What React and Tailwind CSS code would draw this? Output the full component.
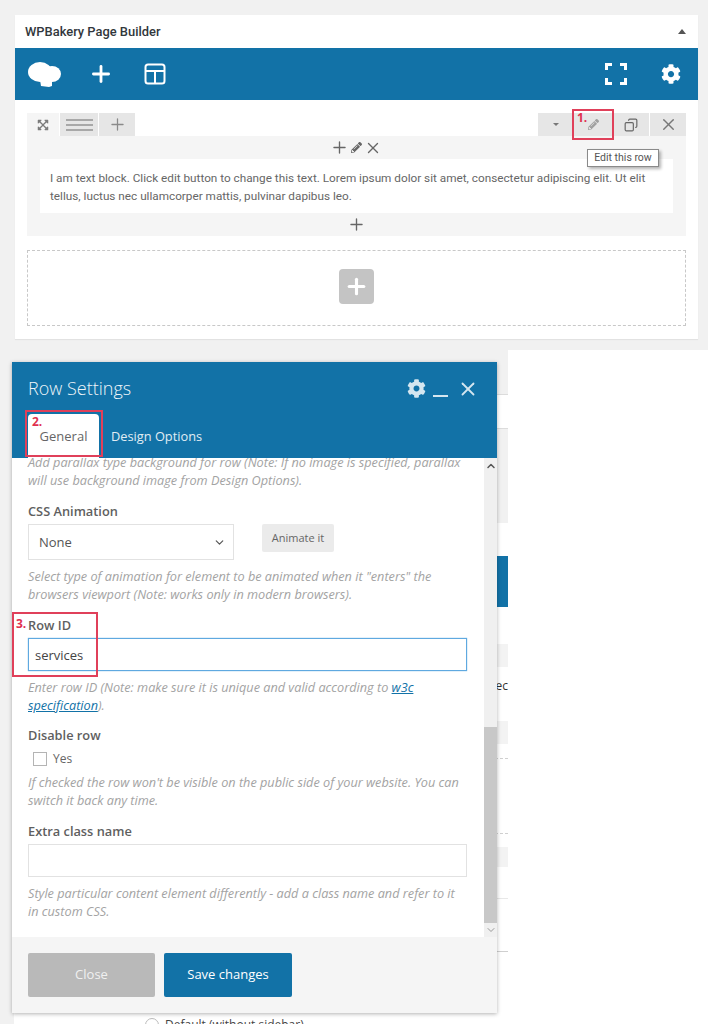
import { Plus, X, Copy, ChevronDown, ChevronUp } from 'lucide-react';
import { FaPencilAlt, FaExpandArrowsAlt, FaCog } from 'react-icons/fa';

const Note = ({ children, className = '' }) => (
  <p className={`text-[12.7px] leading-[18px] italic text-[#a3a3a3] ${className}`}>{children}</p>
);

const Label = ({ children, className = '' }) => (
  <div className={`text-[12.8px] leading-[18px] font-semibold text-[#5f5f5f] ${className}`}>{children}</div>
);

const Mark = ({ children, className = '' }) => (
  <span className={`absolute text-[12px] leading-[14px] font-bold text-[#e0304f] ${className}`}>{children}</span>
);

const CloudLogo = () => (
  <svg width="33" height="25" viewBox="0 0 33 25" fill="white">
    <ellipse cx="12" cy="10" rx="12" ry="10" />
    <ellipse cx="24" cy="12" rx="9" ry="8" />
    <path d="M12 18 L24 17 L24 24 L21 25 L13 24 Z" />
  </svg>
);

const LayoutIcon = () => (
  <svg width="22" height="22" viewBox="0 0 22 22" fill="none" stroke="white" strokeWidth="2">
    <rect x="1.5" y="1.5" width="19" height="19" rx="2.5" />
    <path d="M1.5 8h19M11 8v12.5" />
  </svg>
);

const FullscreenIcon = () => (
  <svg width="22" height="22" viewBox="0 0 22 22" fill="none" stroke="white" strokeWidth="3">
    <path d="M1.5 7V1.5H7M15 1.5h5.5V7M20.5 15v5.500H15M7 20.500H1.500V15" />
  </svg>
);

const HamburgerLines = () => (
  <div className="flex flex-col gap-[3px] w-[27px]">
    <div className="h-[2px] bg-[#a8a8a8]" />
    <div className="h-[2px] bg-[#a8a8a8]" />
    <div className="h-[2px] bg-[#a8a8a8]" />
  </div>
);

const BuilderPanel = () => (
  <div className="mx-[15px] w-[683px] h-[324px] bg-white shadow-[0_1px_1px_rgba(0,0,0,0.06)] font-['Roboto',sans-serif]">
    <div className="h-[33px] flex items-center justify-between pl-[10px] pr-[12px]">
      <span className="text-[12.9px] font-medium text-[#32373c]">WPBakery Page Builder</span>
      <span className="w-0 h-0 border-x-[4px] border-x-transparent border-b-[5px] border-b-[#555]" />
    </div>
    <div className="h-[52px] bg-[#1272a7] flex items-center justify-between pl-[13px] pr-[17px]">
      <div className="flex items-center">
        <CloudLogo />
        <Plus size={26} color="white" strokeWidth={2.6} className="ml-[27px]" />
        <div className="ml-[30px]"><LayoutIcon /></div>
      </div>
      <div className="flex items-center gap-[34px]">
        <FullscreenIcon />
        <FaCog size={20} color="white" />
      </div>
    </div>

    <div className="mx-[12px] mt-[13px]">
      <div className="flex justify-between h-[23px]">
        <div className="flex gap-[1px]">
          <div className="w-[32px] bg-[#f5f5f5] flex items-center justify-center">
            <FaExpandArrowsAlt size={12} color="#7b7b7b" />
          </div>
          <div className="w-[38px] bg-[#e6e6e6] flex items-center justify-center"><HamburgerLines /></div>
          <div className="w-[36px] bg-[#e6e6e6] flex items-center justify-center">
            <Plus size={19} color="#8a8a8a" strokeWidth={1.6} />
          </div>
        </div>
        <div className="flex gap-[1px] relative">
          <div className="w-[35px] bg-[#e6e6e6] flex items-center justify-center">
            <span className="w-0 h-0 border-x-[3px] border-x-transparent border-t-[3px] border-t-[#777]" />
          </div>
          <div className="w-[38px] bg-[#e6e6e6] flex items-center justify-center">
            <FaPencilAlt size={11} color="#a0a0a0" />
          </div>
          <div className="w-[36px] bg-[#e6e6e6] flex items-center justify-center">
            <Copy size={14} color="#666" strokeWidth={2} className="-scale-x-100" />
          </div>
          <div className="w-[36px] bg-[#e6e6e6] flex items-center justify-center">
            <X size={19} color="#777" strokeWidth={1.8} />
          </div>
          <div className="absolute left-[34px] -top-[4px] w-[42px] h-[31px] border-2 border-[#e0405a]" />
          <Mark className="left-[39px] -top-[2px] font-['Open_Sans',sans-serif]">1.</Mark>
          <div className="absolute left-[49px] top-[36px] w-[72px] h-[18px] bg-white border border-[#8a8a8a] shadow-[2px_2px_3px_rgba(0,0,0,0.3)] text-[10.5px] leading-[16px] text-center text-[#555]">
            Edit this row
          </div>
        </div>
      </div>
      <div className="h-[100px] bg-[#f5f5f5] px-[13px]">
        <div className="h-[23px] flex items-center justify-center gap-[2px] pr-[2px]">
          <Plus size={19} color="#666" strokeWidth={1.7} />
          <FaPencilAlt size={11} color="#666" />
          <X size={18} color="#666" strokeWidth={1.8} />
        </div>
        <div className="h-[54px] bg-white px-[10px] pt-[10px] text-[11.75px] leading-[18px] text-[#666]">
          I am text block. Click edit button to change this text. Lorem ipsum dolor sit amet, consectetur adipiscing elit. Ut elit tellus, luctus nec ullamcorper mattis, pulvinar dapibus leo.
        </div>
        <div className="h-[23px] flex items-center justify-center">
          <Plus size={19} color="#666" strokeWidth={1.7} />
        </div>
      </div>
      <div className="mt-[14px] h-[76px] border border-dashed border-[#c8c8c8] flex items-center justify-center pb-[4px]">
        <div className="w-[35px] h-[35px] rounded-[4px] bg-[#c4c4c4] flex items-center justify-center">
          <Plus size={25} color="white" strokeWidth={3} />
        </div>
      </div>
    </div>
  </div>
);

// strip of the page that peeks out to the right of the dialog
const BehindPage = () => (
  <div className="w-[508px] h-[674px] bg-[#f1f1f1] pl-[14px] text-[12px] text-[#444]">
    <div className="h-[45px] border-b border-[#dcdcdc]" />
    <div className="h-[34px] bg-white border-b border-[#dcdcdc]" />
    <div className="h-[94px]" />
    <div className="h-[33px] bg-white" />
    <div className="h-[51px] bg-[#1272a7]" />
    <div className="h-[417px] bg-white pt-[37px]">
      <div className="h-[23px] bg-[#f3f3f3]" />
      <div className="h-[54px] leading-[38px] text-right text-[#333]">ec</div>
      <div className="h-[23px] bg-[#f3f3f3]" />
      <div className="mt-[14px] h-[76px] border-y border-dashed border-[#d0d0d0]" />
      <div className="mt-[13px] h-[20px] bg-[#f3f3f3]" />
      <div className="mt-[31px] h-[1px] bg-[#e8e8e8]" />
      <div className="mt-[52px] h-[1px] bg-[#cfcfcf]" />
      <div className="mt-[64px] ml-[131px] flex items-center gap-[6px] text-[#444]">
        <span className="w-[14px] h-[14px] rounded-full border border-[#bbb] bg-white shrink-0" />
        Default (without sidebar)
      </div>
    </div>
  </div>
);

const RowSettings = () => (
  <div className="absolute left-[12px] top-[12px] w-[485px] h-[651px] flex flex-col bg-white shadow-[0_1px_4px_rgba(0,0,0,0.3)]">
    <div className="h-[96px] bg-[#1272a7] shrink-0 relative px-[16px]">
      <div className="flex items-center justify-between pt-[14px] pr-[2px]">
        <span className="text-[18px] leading-[25px] font-light text-[#eef5f9]">Row Settings</span>
        <div className="flex items-center">
          <FaCog size={19} color="#d4e6f0" />
          <div className="w-[15px] h-[2px] bg-[#d4e6f0] ml-[7px] mt-[14px]" />
          <X size={22} color="#d4e6f0" strokeWidth={2} className="ml-[9px]" />
        </div>
      </div>
      <div className="flex items-end absolute left-[16px] bottom-0 h-[44px]">
        <div className="w-[71px] h-[44px] bg-white rounded-t-[4px] text-center pt-[13px] text-[13px] leading-[18px] text-[#666]">General</div>
        <div className="pl-[12px] pb-[13px] text-[12.8px] leading-[18px] font-medium text-[#e0edf4]">Design Options</div>
      </div>
    </div>

    <div className="flex flex-1 min-h-0">
      <div className="flex-1 overflow-hidden pl-[16px] pr-[17px] -mt-[5px]">
        <Note>Add parallax type background for row (Note: If no image is specified, parallax will use background image from Design Options).</Note>
        <Label className="mt-[13px]">CSS Animation</Label>
        <div className="flex mt-[4px]">
          <div className="w-[206px] h-[36px] border border-[#e2e2e2] flex items-center justify-between pl-[10px] pr-[7px] pt-[1px] text-[13px] text-[#555]">
            None
            <ChevronDown size={13} color="#555" strokeWidth={2.2} />
          </div>
          <div className="ml-[28px] w-[72px] h-[28px] bg-[#ebebeb] rounded-[2px] flex items-center justify-center text-[11px] text-[#666]">Animate it</div>
        </div>
        <Note className="mt-[7px]">Select type of animation for element to be animated when it "enters" the browsers viewport (Note: works only in modern browsers).</Note>
        <Label className="mt-[13px]">Row ID</Label>
        <input
          readOnly
          value="services"
          className="block w-full h-[33px] mt-[4px] px-[6px] border border-[#5fa9e0] shadow-[0_0_1px_#5fa9e0] outline-none text-[13px] text-[#444]"
        />
        <Note className="mt-[7px]">
          Enter row ID (Note: make sure it is unique and valid according to <a className="text-[#1272a7] underline">w3c specification</a>).
        </Note>
        <Label className="mt-[12px]">Disable row</Label>
        <div className="flex items-center mt-[7px] ml-[5px] h-[16px]">
          <span className="w-[14px] h-[14px] border border-[#b4b4b4] bg-white" />
          <span className="ml-[6px] text-[12px] text-[#666]">Yes</span>
        </div>
        <Note className="mt-[6px]">If checked the row won't be visible on the public side of your website. You can switch it back any time.</Note>
        <Label className="mt-[13px]">Extra class name</Label>
        <input readOnly className="block w-full h-[33px] mt-[4px] border border-[#e2e2e2] outline-none" />
        <Note className="mt-[7px]">Style particular content element differently - add a class name and refer to it in custom CSS.</Note>
      </div>
      <div className="w-[13px] bg-[#f0f0f0] shrink-0 flex flex-col items-center justify-between">
        <ChevronUp size={12} color="#555" strokeWidth={3} className="mt-[2px]" />
        <div className="w-full">
          <div className="h-[196px] bg-[#c8c8c8]" />
          <div className="h-[14px] flex items-center justify-center">
            <ChevronDown size={12} color="#999" strokeWidth={2} />
          </div>
        </div>
      </div>
    </div>

    <div className="h-[76px] shrink-0 bg-[#f5f5f5] flex items-start gap-[9px] pl-[16px] pt-[16px]">
      <div className="w-[127px] h-[44px] rounded-[2px] bg-[#b9b9b9] flex items-center justify-center text-[13px] text-[#f0f0f0]">Close</div>
      <div className="w-[128px] h-[44px] rounded-[2px] bg-[#1272a7] flex items-center justify-center text-[13px] text-white">Save changes</div>
    </div>

    {/* red annotation boxes */}
    <div className="absolute left-[13px] top-[48px] w-[78px] h-[47px] border-2 border-[#e0405a] pointer-events-none" />
    <Mark className="left-[20px] top-[53px]">2.</Mark>
    <div className="absolute left-0 top-[250px] w-[86px] h-[65px] border-2 border-[#e0405a] pointer-events-none" />
    <Mark className="left-[4px] top-[255px]">3.</Mark>
  </div>
);

export default function App() {
  return (
    <div className="w-[708px] h-[1024px] overflow-hidden bg-white font-['Open_Sans',sans-serif]">
      <div className="h-[350px] bg-[#f1f1f1] pt-[15px]">
        <BuilderPanel />
      </div>
      <div className="relative">
        <BehindPage />
        <RowSettings />
      </div>
    </div>
  );
}
